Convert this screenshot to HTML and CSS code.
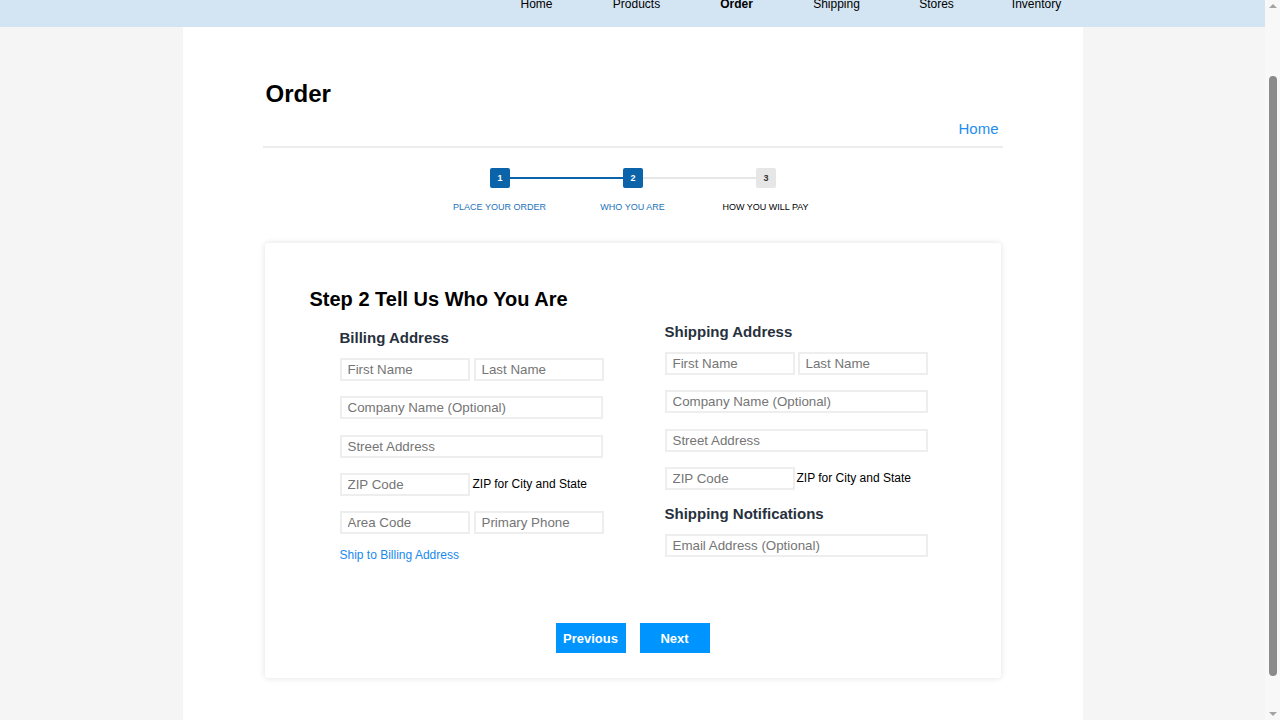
FILE: index.html
```html
<!DOCTYPE html>
<html lang="en">
<head>
<meta charset="utf-8">
<title>Order</title>
<link rel="stylesheet" href="styles.css">
</head>
<body>
<header class="topbar">
  <nav class="nav">
    <a class="nav-item" href="#">Home</a>
    <a class="nav-item" href="#">Products</a>
    <a class="nav-item active" href="#">Order</a>
    <a class="nav-item" href="#">Shipping</a>
    <a class="nav-item" href="#">Stores</a>
    <a class="nav-item" href="#">Inventory</a>
  </nav>
</header>
<main class="page">
  <h1 class="page-title">Order</h1>
  <div class="crumbs"><a href="#" class="crumb-link">Home</a></div>
  <div class="rule"></div>

  <div class="stepper">
    <div class="step-track">
      <span class="step-box done">1</span>
      <span class="step-line done"></span>
      <span class="step-box done">2</span>
      <span class="step-line"></span>
      <span class="step-box">3</span>
    </div>
    <div class="step-labels">
      <span class="step-label done">PLACE YOUR ORDER</span>
      <span class="step-label done">WHO YOU ARE</span>
      <span class="step-label">HOW YOU WILL PAY</span>
    </div>
  </div>

  <section class="card">
    <h2 class="card-title">Step 2 Tell Us Who You Are</h2>
    <div class="columns">
      <div class="col billing">
        <h3 class="col-title">Billing Address</h3>
        <div class="row">
          <input class="field half" placeholder="First Name">
          <input class="field half" placeholder="Last Name">
        </div>
        <div class="row"><input class="field full" placeholder="Company Name (Optional)"></div>
        <div class="row"><input class="field full" placeholder="Street Address"></div>
        <div class="row">
          <input class="field half" placeholder="ZIP Code">
          <span class="hint">ZIP for City and State</span>
        </div>
        <div class="row">
          <input class="field half" placeholder="Area Code">
          <input class="field half" placeholder="Primary Phone">
        </div>
        <a href="#" class="ship-link">Ship to Billing Address</a>
      </div>
      <div class="col shipping">
        <h3 class="col-title">Shipping Address</h3>
        <div class="row tight">
          <input class="field half" placeholder="First Name">
          <input class="field half" placeholder="Last Name">
        </div>
        <div class="row"><input class="field full" placeholder="Company Name (Optional)"></div>
        <div class="row"><input class="field full" placeholder="Street Address"></div>
        <div class="row tight">
          <input class="field half" placeholder="ZIP Code">
          <span class="hint">ZIP for City and State</span>
        </div>
        <h3 class="col-title">Shipping Notifications</h3>
        <div class="row last"><input class="field full" placeholder="Email Address (Optional)"></div>
      </div>
    </div>
    <div class="actions">
      <button class="btn" type="button">Previous</button>
      <button class="btn" type="button">Next</button>
    </div>
  </section>
</main>
<div class="fake-scrollbar" aria-hidden="true">
  <span class="sb-arrow up"></span>
  <span class="sb-thumb"></span>
  <span class="sb-arrow down"></span>
</div>
<script src="script.js"></script>
</body>
</html>
```

FILE: styles.css
```css
html, body {
  margin: 0;
  padding: 0;
}
body {
  background: #f5f5f5;
  font-family: "Liberation Sans", Arial, sans-serif;
  color: #000;
  padding-right: 15px;
}

.topbar {
  background: #d3e5f2;
  height: 105px;
  box-sizing: border-box;
  padding-top: 75px;
}
.nav {
  width: 900px;
  margin: 0 auto;
  display: flex;
  padding-left: 304px;
  box-sizing: border-box;
}
.nav-item {
  width: 100px;
  flex: none;
  text-align: center;
  font-size: 12px;
  line-height: 14px;
  color: #000;
  text-decoration: none;
}
.nav-item.active {
  font-weight: bold;
}

.page {
  width: 900px;
  margin: 0 auto;
  background: #fff;
  box-sizing: border-box;
  padding: 53px 80px 72px;
}
.page-title {
  margin: 0;
  padding-left: 3px;
  font-size: 24px;
  line-height: 28px;
  font-weight: bold;
}
.crumbs {
  margin-top: 12px;
  text-align: right;
  padding-right: 4px;
  font-size: 15px;
  line-height: 18px;
}
.crumb-link {
  color: #1f8ef1;
  text-decoration: none;
}
.rule {
  margin-top: 8px;
  height: 2px;
  background: #ececec;
}

.stepper {
  margin-top: 20px;
  display: flex;
  flex-direction: column;
  align-items: center;
}
.step-track {
  display: flex;
  align-items: center;
  padding-left: 1px;
}
.step-box {
  width: 20px;
  height: 20px;
  border-radius: 2px;
  background: #e6e6e6;
  color: #333;
  font-size: 9px;
  font-weight: bold;
  line-height: 20px;
  text-align: center;
}
.step-box.done {
  background: #0b64a9;
  color: #fff;
}
.step-line {
  width: 113px;
  height: 2px;
  background: #e6e6e6;
}
.step-line.done {
  background: #0b64a9;
}
.step-labels {
  margin-top: 13px;
  display: flex;
}
.step-label {
  width: 133px;
  text-align: center;
  font-size: 9px;
  line-height: 12px;
  color: #000;
}
.step-label.done {
  color: #1a73bb;
}

.card {
  margin: 30px 2px 0;
  background: #fff;
  border-radius: 3px;
  box-shadow: 0 0 6px rgba(0, 0, 0, 0.12);
  padding: 44px 45px 25px;
}
.card-title {
  margin: 0;
  font-size: 20px;
  line-height: 24px;
  font-weight: bold;
}
.columns {
  margin-top: 12px;
  display: flex;
  align-items: flex-start;
}
.col {
  display: flex;
  flex-direction: column;
}
.billing {
  margin-left: 30px;
  width: 265px;
  padding-top: 6px;
}
.shipping {
  margin-left: 60px;
  width: 264px;
}
.col-title {
  margin: 0 0 11px;
  font-size: 15px;
  line-height: 18px;
  font-weight: bold;
  color: #27313d;
}
.row {
  display: flex;
  align-items: center;
  gap: 4px;
  margin-bottom: 15.3px;
}
.row.tight {
  gap: 3px;
}
.row.last {
  margin-bottom: 0;
}
.field {
  box-sizing: border-box;
  height: 23px;
  border: 2px solid #eeeeee;
  padding: 0 6px;
  font-family: "Liberation Sans", Arial, sans-serif;
  font-size: 13.33px;
  color: #333;
  background: #fff;
  outline: none;
  margin: 0;
}
.field::placeholder {
  color: #757575;
}
.field.half {
  width: 130px;
}
.field.full {
  width: 263px;
}
.hint {
  font-size: 12px;
  color: #000;
  margin-left: -1px;
}
.ship-link {
  margin-top: -1px;
  font-size: 12px;
  line-height: 14px;
  color: #1789ee;
  text-decoration: none;
}

.actions {
  margin-top: 61px;
  display: flex;
  justify-content: center;
  gap: 14px;
}
.btn {
  width: 70px;
  height: 30px;
  border: none;
  border-radius: 0;
  background: #0094ff;
  color: #fff;
  font-family: "Liberation Sans", Arial, sans-serif;
  font-size: 13px;
  font-weight: bold;
  padding: 0;
  cursor: pointer;
}

.fake-scrollbar {
  position: fixed;
  top: 0;
  right: 0;
  width: 15px;
  height: 100vh;
  background: #f8f8f8;
  display: flex;
  flex-direction: column;
  align-items: center;
}
.sb-arrow {
  width: 0;
  height: 0;
  border-left: 4px solid transparent;
  border-right: 4px solid transparent;
}
.sb-arrow.up {
  margin-top: 4px;
  border-bottom: 4px solid #a3a3a3;
}
.sb-arrow.down {
  margin-top: auto;
  margin-bottom: 4px;
  border-top: 4px solid #a3a3a3;
}
.sb-thumb {
  margin-top: 68px;
  width: 8px;
  height: 600px;
  border-radius: 4px;
  background: #8b8b8b;
}
```

FILE: script.js
```js
window.scrollTo(0, 78);
window.addEventListener('load', function () {
  window.scrollTo(0, 78);
});
```
